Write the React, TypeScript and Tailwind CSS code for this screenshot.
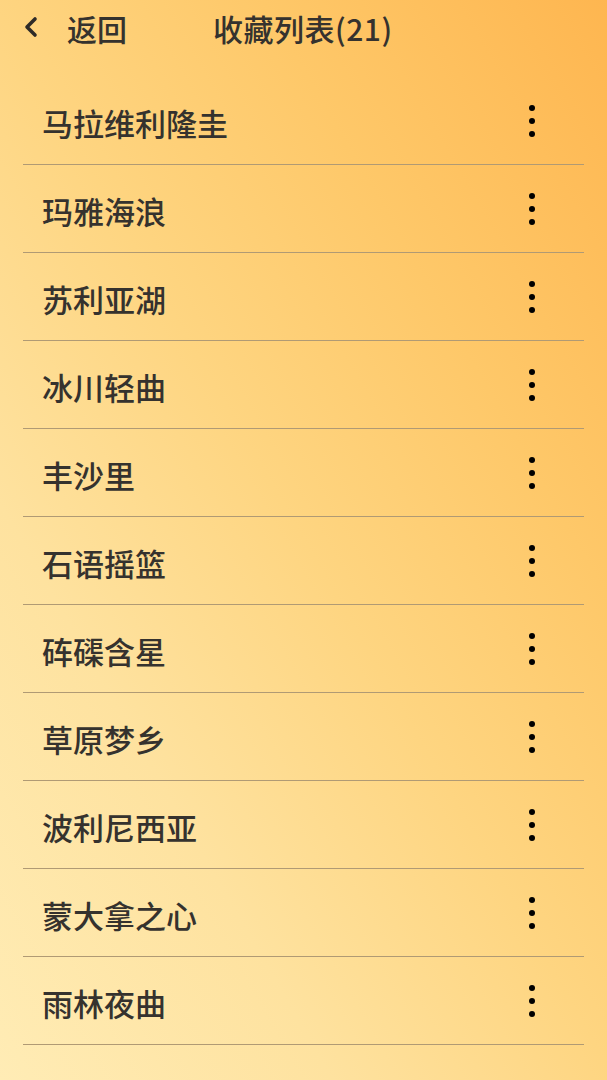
import React from "react";

const items = [
  "马拉维利隆圭",
  "玛雅海浪",
  "苏利亚湖",
  "冰川轻曲",
  "丰沙里",
  "石语摇篮",
  "砗磲含星",
  "草原梦乡",
  "波利尼西亚",
  "蒙大拿之心",
  "雨林夜曲",
];

export default function App() {
  return (
    <div
      className="w-[607px] h-[1080px] overflow-hidden bg-[linear-gradient(240deg,#feb650_0%,#fec869_28%,#fed581_50%,#fee29f_73%,#ffecb5_100%)] text-[#35322e]"
      style={{ fontFamily: '"Noto Sans CJK SC", "Noto Sans", sans-serif' }}
    >
      <div className="h-[56px] flex items-center">
        <div className="flex items-center pl-[23px]">
          <svg width="16" height="22" viewBox="0 0 16 22" className="mt-[-2px]">
            <polyline
              points="12,3 4,11 12,19"
              fill="none"
              stroke="#2e2b28"
              strokeWidth="3.6"
              strokeLinecap="round"
              strokeLinejoin="round"
            />
          </svg>
          <span className="ml-[28px] text-[30px] leading-none font-medium">返回</span>
        </div>
        <span className="ml-[86px] text-[30px] leading-none font-medium tracking-[0.5px]">收藏列表(21)</span>
      </div>
      <div className="mt-[21px] mx-[23px]">
        {items.map((t) => (
          <div
            key={t}
            className="h-[88px] flex items-center justify-between border-b border-[#b09a74]"
          >
            <span className="pl-[19px] pt-[4px] text-[31px] leading-none font-medium">{t}</span>
            <div className="mr-[49px] flex flex-col gap-[7px]">
              <span className="block w-[6px] h-[6px] rounded-full bg-black" />
              <span className="block w-[6px] h-[6px] rounded-full bg-black" />
              <span className="block w-[6px] h-[6px] rounded-full bg-black" />
            </div>
          </div>
        ))}
      </div>
    </div>
  );
}
